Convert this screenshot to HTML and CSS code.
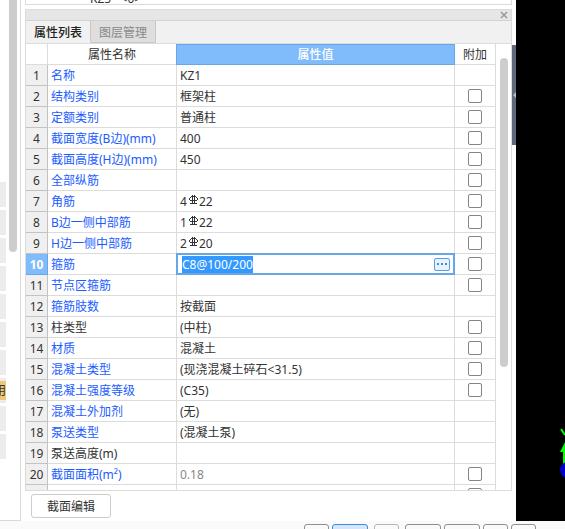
FILE: index.html
```html
<!DOCTYPE html>
<html lang="zh">

<head>
    <meta charset="utf-8">
    <meta name="viewport" content="width=device-width, initial-scale=1.0">

    <title>属性列表</title>

    <link rel="stylesheet" href="styles.css">

</head>

<body>
    <main>
        <aside class="sidebar">
            <ul class="items">
                <li></li>
                <li></li>
                <li></li>
                <li></li>
                <li></li>
                <li></li>
                <li></li>
                <li><span class="tag">用</span></li>
                <li></li>
                <li></li>
            </ul>
            <div class="sidebar_thumb"></div>
        </aside>

        <section class="dock">
            <div class="tree"><p>KZ5   &lt;0&gt;</p></div>

            <div class="panel">
                <header class="titlebar">
                    <button class="luk" aria-label="关闭">
                        <svg width="8" height="8" viewBox="0 0 8 8"><path d="M1 1L7 7M7 1L1 7" stroke="#999" stroke-width="1.5" /></svg>
                    </button>
                </header>
                <nav class="tabs">
                    <button class="tab active">属性列表</button>
                    <button class="tab">图层管理</button>
                </nav>
                <div class="content">
                    <table>
                        <colgroup>
                            <col class="col_nr">
                            <col class="col_name">
                            <col>
                            <col class="col_extra">
                        </colgroup>
                        <thead>
                            <tr>
                                <th></th>
                                <th>属性名称</th>
                                <th class="current">属性值</th>
                                <th>附加</th>
                            </tr>
                        </thead>
                        <tbody></tbody>
                    </table>
                    <div class="scroll"><div class="thumb"></div></div>
                </div>
            </div>

            <footer class="actions">
                <button class="edit">截面编辑</button>
            </footer>
        </section>

        <button class="handle" aria-label="折叠">
            <svg width="3" height="6" viewBox="0 0 3 6"><path d="M3 0V6L0 3Z" fill="#bbb" /></svg>
        </button>

        <div class="view">
            <svg width="49" height="56" viewBox="0 0 49 56">
                <path d="M45 1L49 7" stroke="#0f0" stroke-width="2" />
                <path d="M44 24H47V37H52V24H55L49 14Z" fill="#0f0" />
                <circle cx="52" cy="42" r="8" fill="#00c" />
            </svg>
        </div>
    </main>

    <div class="statusbar">
        <span class="key"></span>
        <span class="key wide on"></span>
        <span class="key light"></span>
        <span class="key wide"></span>
        <span class="key wide"></span>
        <span class="key"></span>
        <span class="key"></span>
    </div>

    <template id="row">
        <tr>
            <th class="nr"></th>
            <td class="name"></td>
            <td class="value"></td>
            <td class="extra"></td>
        </tr>
    </template>

    <template id="rebar">
        <svg class="rebar" width="9" height="10" viewBox="0 0 9 10" role="img" aria-label="三级钢">
            <path d="M3.5 0V9M5.5 0V9M1 8.5H8" />
            <path d="M2 1.5H7M0.5 3V5M8.5 3V5M1 2.5H2M7 2.5H8M1 5.5H8" />
        </svg>
    </template>

    <template id="editor">
        <div class="editor">
            <input type="text" aria-label="箍筋">
            <button aria-label="更多">
                <svg width="10" height="2" viewBox="0 0 10 2"><path d="M0 0H2V2H0ZM4 0H6V2H4ZM8 0H10V2H8Z" fill="#3d8ee0" /></svg>
            </button>
        </div>
    </template>

    <script src="script.js"></script>
</body>

</html>
```
FILE: styles.css
```css
* {
    box-sizing: border-box;
}

body {
    display: flex;
    flex-direction: column;
    height: 100vh;
    margin: 0;
    overflow: hidden;
    background: #fff;
    color: #333;
    font: 12px/20px "Noto Sans", "Noto Sans CJK SC", sans-serif;
}

button,
input {
    margin: 0;
    padding: 0;
    border: 0;
    background: none;
    color: inherit;
    font: inherit;
}

svg {
    display: block;
}

main {
    display: flex;
    flex: 1;
    min-height: 0;
}

/* left list */
.sidebar {
    display: flex;
    justify-content: space-between;
    width: 21px;
    padding-right: 3px;
    border-right: 1px solid #d9d9d9;
    border-bottom: 1px solid #d9d9d9;
}

.items {
    display: flex;
    flex-direction: column;
    gap: 3px;
    width: 6px;
    margin: 0;
    padding: 182px 0 0;
    list-style: none;
}

.items li {
    display: flex;
    align-items: center;
    height: 25px;
    background: #ececec;
}

.tag {
    display: flex;
    justify-content: flex-end;
    width: 6px;
    overflow: hidden;
    background: #f0c774;
    line-height: 19px;
}

.sidebar_thumb {
    width: 8px;
    height: 252px;
    border-radius: 0 0 4px 4px;
    background: #cdcdcd;
}

/* docked panel */
.dock {
    display: flex;
    flex: 1;
    flex-direction: column;
    min-width: 0;
    padding-left: 4px;
}

.tree {
    display: flex;
    align-items: flex-end;
    height: 5px;
    margin-bottom: 4px;
    padding-left: 64px;
    overflow: hidden;
    border: 1px solid #dcdcdc;
    border-top: 0;
}

.tree p {
    margin: 0;
    line-height: 10px;
    white-space: pre;
}

.panel {
    display: flex;
    flex: 1;
    flex-direction: column;
    min-height: 0;
    border: 1px solid #dcdcdc;
}

.titlebar {
    display: flex;
    align-items: center;
    justify-content: flex-end;
    height: 11px;
    padding-right: 3px;
    border-bottom: 1px solid #d2d2d2;
    background: #e6e6e6;
}

.tabs {
    display: flex;
    height: 23px;
    border-bottom: 1px solid #dcdcdc;
    background: #f1f1f1;
}

.tab {
    width: 65px;
    padding-top: 2px;
    border-right: 1px solid #c8c8c8;
    border-bottom: 1px solid #c8c8c8;
    background: #dedede;
    color: #888;
}

.tab.active {
    border-bottom-color: #f1f1f1;
    background: #f1f1f1;
    color: #222;
    font-weight: 500;
}

.content {
    display: flex;
    flex: 1;
    min-height: 0;
    overflow: hidden;
}

table {
    flex: 1;
    align-self: flex-start;
    width: 100%;
    border-spacing: 0;
    table-layout: fixed;
}

.col_nr {
    width: 22px;
}

.col_name {
    width: 129px;
}

.col_extra {
    width: 41px;
}

th,
td {
    height: 21px;
    padding: 0;
    border-right: 1px solid #dcdcdc;
    border-bottom: 1px solid #dcdcdc;
    font-weight: 400;
    text-align: left;
    white-space: nowrap;
}

th,
.name,
.value {
    padding-top: 2px;
    line-height: 18px;
}

thead th {
    text-align: center;
}

thead .current {
    border-color: #66a7e8;
    background: #80bbfb;
    box-shadow: -1px 0 #66a7e8, inset 0 1px #66a7e8;
    color: #fff;
    font-weight: 500;
}

.nr {
    border-color: #c3c3c3;
    background: #f0f0f0;
    text-align: center;
}

.nr.current {
    border-color: #66a7e8;
    background: #80bbfb;
    color: #fff;
    font-weight: 700;
}

.name,
.value {
    padding-left: 3px;
}

.name {
    color: #1a5cff;
}

.name.plain {
    color: #333;
}

.value.muted {
    color: #888;
}

.value.editing {
    padding-top: 0;
}

.rebar {
    display: inline-block;
    margin: 0 1px 0 2px;
    fill: none;
    stroke: #333;
    vertical-align: 1px;
}

.extra input {
    display: block;
    width: 14px;
    height: 14px;
    margin: 0 auto;
    border: 1px solid #858585;
    border-radius: 2px;
    background: #fff;
    appearance: none;
}

.editor {
    display: flex;
    align-items: center;
    height: 22px;
    margin: -1px -1px -1px -4px;
    padding: 0 3px 0 4px;
    border: 2px solid #66a7e8;
    background: #fff;
}

.editor input {
    flex: 1;
    min-width: 0;
    height: 18px;
    padding-top: 1px;
    outline: 0;
}

.editor input::selection {
    background: #3399ff;
    color: #fff;
}

.editor button {
    display: flex;
    align-items: center;
    justify-content: center;
    width: 16px;
    height: 13px;
    border: 1px solid #559fe8;
    border-radius: 2px;
    background: #eaf1fb;
}

.scroll {
    width: 15px;
    padding: 14px 3px 0 4px;
}

.thumb {
    height: 309px;
    border-radius: 4px;
    background: #cdcdcd;
}

.actions {
    padding: 3px 6px;
}

.edit {
    display: block;
    width: 80px;
    height: 24px;
    padding-top: 1px;
    border: 1px solid #ccc;
    border-radius: 3px;
    background: #fff;
}

/* model view */
.handle {
    display: flex;
    align-items: center;
    justify-content: flex-end;
    width: 4px;
    height: 100px;
    margin-top: 45px;
    background: #5f6b7b;
}

.view {
    display: flex;
    align-items: flex-end;
    width: 49px;
    padding-bottom: 37px;
    background: #000;
}

.statusbar {
    display: flex;
    gap: 3px;
    height: 8px;
    padding: 3px 0 0 304px;
    overflow: hidden;
    background: #fafafa;
}

.key {
    width: 25px;
    height: 20px;
    border: 1px solid #909090;
    border-radius: 3px;
}

.key.wide {
    width: 36px;
}

.key.on {
    border-color: #3d8ee0;
    background: #d5e5fb;
}

.key.light {
    margin: 0 3px;
    border-color: #b5b5b5;
}
```
FILE: script.js
```js
// name, value, checkbox, extra class
const rows = [
    ["名称", "KZ1", false],
    ["结构类别", "框架柱", true],
    ["定额类别", "普通柱", true],
    ["截面宽度(B边)(mm)", "400", true],
    ["截面高度(H边)(mm)", "450", true],
    ["全部纵筋", "", true],
    ["角筋", "4#22", true],
    ["B边一侧中部筋", "1#22", true],
    ["H边一侧中部筋", "2#20", true],
    ["箍筋", "C8@100/200", true, "edit"],
    ["节点区箍筋", "", true],
    ["箍筋肢数", "按截面", false],
    ["柱类型", "(中柱)", true, "plain"],
    ["材质", "混凝土", true],
    ["混凝土类型", "(现浇混凝土碎石<31.5)", true],
    ["混凝土强度等级", "(C35)", true],
    ["混凝土外加剂", "(无)", false],
    ["泵送类型", "(混凝土泵)", false],
    ["泵送高度(m)", "", false, "plain"],
    ["截面面积(m²)", "0.18", true, "muted"],
    ["", "", true]
];

const body = document.querySelector("tbody");
const rowTemplate = document.querySelector("#row");
const rebar = document.querySelector("#rebar");
const editor = document.querySelector("#editor");

rows.forEach(([name, value, check, type], i) => {
    const row = rowTemplate.content.cloneNode(true);
    const cell = row.querySelector(".value");

    row.querySelector(".nr").textContent = name ? i + 1 : "";
    row.querySelector(".name").textContent = name;

    if (type == "edit") {
        row.querySelector(".nr").classList.add("current");
        cell.classList.add("editing");
        cell.append(editor.content.cloneNode(true));
        cell.querySelector("input").value = value;
    } else {
        // "#" stands for the rebar grade symbol
        value.split("#").forEach((part, n) => {
            if (n > 0) cell.append(rebar.content.firstElementChild.cloneNode(true));
            cell.append(part);
        });
    }

    if (type == "plain") row.querySelector(".name").classList.add("plain");
    if (type == "muted") cell.classList.add("muted");

    if (check) {
        const box = document.createElement("input");
        box.type = "checkbox";
        box.ariaLabel = name + "附加";
        row.querySelector(".extra").append(box);
    }

    body.append(row);
});

const field = document.querySelector(".editor input");
field.focus();
field.select();
```
